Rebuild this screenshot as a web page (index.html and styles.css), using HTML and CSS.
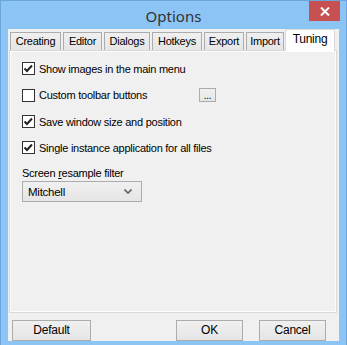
FILE: index.html
```html
<!DOCTYPE html>
<html lang="en">
<head>
  <meta charset="UTF-8">
  <title>Options</title>
  <link rel="stylesheet" href="styles.css">
</head>
<body>

  <div class="window">
    <div class="titlebar">
      <span class="title">Options</span>
      <span class="close-btn">
        <svg width="10" height="9" viewBox="0 0 10 9">
          <path d="M1 0.5 L9 8.5 M9 0.5 L1 8.5" stroke="#fff" stroke-width="2"/>
        </svg>
      </span>
    </div>

    <div class="client">
      <div class="tabs">
        <span class="tab tab-creating">Creating</span>
        <span class="tab tab-editor">Editor</span>
        <span class="tab tab-dialogs">Dialogs</span>
        <span class="tab tab-hotkeys">Hotkeys</span>
        <span class="tab tab-export">Export</span>
        <span class="tab tab-import">Import</span>
        <span class="tab tab-tuning active">Tuning</span>
      </div>

      <div class="tab-page">
        <div class="options">
          <label class="check">
            <span class="box">
              <svg width="11" height="11" viewBox="0 0 11 11"><path d="M1.5 5.5 L4 8 L9 2.5" fill="none" stroke="#222" stroke-width="2"/></svg>
            </span>
            Show images in the main menu
          </label>

          <div class="check-row">
            <label class="check">
              <span class="box"></span>
              Custom toolbar buttons
            </label>
            <span class="dots-btn">...</span>
          </div>

          <label class="check">
            <span class="box">
              <svg width="11" height="11" viewBox="0 0 11 11"><path d="M1.5 5.5 L4 8 L9 2.5" fill="none" stroke="#222" stroke-width="2"/></svg>
            </span>
            Save window size and position
          </label>

          <label class="check">
            <span class="box">
              <svg width="11" height="11" viewBox="0 0 11 11"><path d="M1.5 5.5 L4 8 L9 2.5" fill="none" stroke="#222" stroke-width="2"/></svg>
            </span>
            Single instance application for all files
          </label>
        </div>

        <div class="filter">
          <span class="filter-label">Screen <u>r</u>esample filter</span>
          <div class="combo">
            <span>Mitchell</span>
            <svg width="8" height="5" viewBox="0 0 8 5"><path d="M0.5 0.5 L4 4 L7.5 0.5" fill="none" stroke="#606060" stroke-width="1.6"/></svg>
          </div>
        </div>
      </div>

      <div class="buttons">
        <span class="btn btn-wide">Default</span>
        <span class="spacer"></span>
        <span class="btn">OK</span>
        <span class="btn">Cancel</span>
      </div>
    </div>
  </div>

</body>
</html>
```

FILE: styles.css
```css
body {
  margin: 0;
  font-family: 'Liberation Sans', Arial, sans-serif;
  font-size: 11px;
  letter-spacing: -0.25px;
  color: #000;
}

.window {
  width: 347px;
  height: 345px;
  box-sizing: border-box;
  background-color: #8cc5f5;
  border: 1px solid #6aa6dc;
  border-bottom: none;
  display: flex;
  flex-direction: column;
  padding: 0 7px 4px 7px;
}

.titlebar {
  height: 30px;
  position: relative;
  display: flex;
  align-items: center;
  justify-content: center;
}

.title {
  font-family: 'Noto Sans', sans-serif;
  font-size: 15px;
  letter-spacing: 0;
  color: #333;
  margin-top: 1px;
}

.close-btn {
  position: absolute;
  right: -1px;
  top: 0;
  width: 31px;
  height: 20px;
  background-color: #c75050;
  display: flex;
  align-items: center;
  justify-content: center;
}

.client {
  flex: 1;
  background-color: #f0f0f0;
  display: flex;
  flex-direction: column;
}

/* tabs */
.tabs {
  display: flex;
  align-items: flex-end;
  height: 21px;
  padding-left: 2px;
  gap: 2px;
  position: relative;
  z-index: 1;
}

.tab {
  box-sizing: border-box;
  height: 18px;
  line-height: 17px;
  text-align: center;
  border: 1px solid #acacac;
  border-bottom: none;
  background: linear-gradient(#f0f0f0, #e5e5e5);
  white-space: nowrap;
}

.tab-creating { width: 51px; }
.tab-editor { width: 39px; }
.tab-dialogs { width: 46px; }
.tab-hotkeys { width: 50px; }
.tab-export { width: 40px; }
.tab-import { width: 38px; }

.tab.active {
  width: 50px;
  height: 22px;
  line-height: 19px;
  margin-bottom: -1px;
  margin-left: -1px;
  background: #fff;
  border-color: #d9d9d9;
  font-size: 12px;
}

.tab-page {
  height: 250px;
  margin: 0 2px 0 1px;
  border: 1px solid #d9d9d9;
  box-shadow: inset 0 0 0 1px #fcfcfc;
  padding: 11px 12px 0 12px;
  display: flex;
  flex-direction: column;
}

.options {
  display: flex;
  flex-direction: column;
  gap: 13px;
}

.check {
  display: flex;
  align-items: center;
  gap: 4px;
  height: 13px;
  white-space: nowrap;
}

.box {
  width: 11px;
  height: 11px;
  border: 1px solid #333;
  background-color: #fff;
  display: inline-flex;
}

.check-row {
  display: flex;
  justify-content: space-between;
  align-items: center;
  width: 194px;
}

.dots-btn {
  width: 15px;
  height: 12px;
  border: 1px solid #acacac;
  background: linear-gradient(#f0f0f0, #e5e5e5);
  font-size: 10px;
  line-height: 14px;
  text-align: center;
  overflow: hidden;
}

.filter {
  margin-top: 13px;
  display: flex;
  flex-direction: column;
  gap: 2px;
}

.combo {
  width: 104px;
  height: 19px;
  border: 1px solid #acacac;
  background: linear-gradient(#f0f0f0, #e5e5e5);
  display: flex;
  align-items: center;
  justify-content: space-between;
  padding: 0 9px 0 5px;
  font-size: 11.5px;
}

/* bottom buttons */
.buttons {
  display: flex;
  padding: 7px 13px 0 4px;
  gap: 16px;
}

.spacer {
  flex: 1;
}

.btn {
  width: 65px;
  height: 19px;
  border: 1px solid #acacac;
  background: linear-gradient(#f0f0f0, #e5e5e5);
  text-align: center;
  line-height: 19px;
  font-size: 12px;
}

.btn-wide {
  width: 77px;
}
```
